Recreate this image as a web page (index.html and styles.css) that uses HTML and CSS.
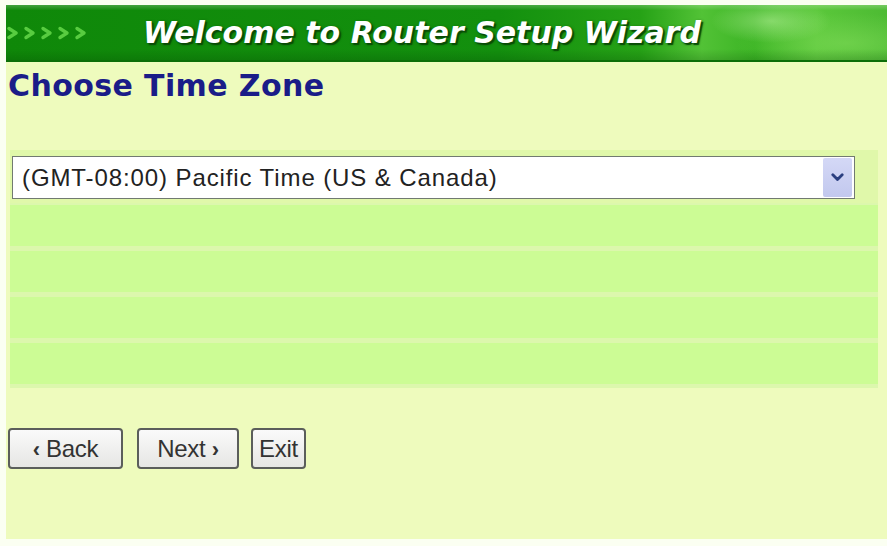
FILE: index.html
```html
<!DOCTYPE html>
<html lang="en">
<head>
  <meta charset="UTF-8">
  <meta name="viewport" content="width=device-width, initial-scale=1.0">
  <title>Router Setup Wizard</title>
  <link rel="stylesheet" href="styles.css">
</head>
<body>
  <div class="wizard">
    <div class="banner">
      <svg class="banner-arrows" width="90" height="14" viewBox="0 0 90 14" aria-hidden="true">
        <g fill="none" stroke="#58cc40" stroke-width="3.4" stroke-linecap="round" stroke-linejoin="round">
          <polyline points="2,2.5 9,7 2,11.5"/>
          <polyline points="19,2.5 26,7 19,11.5"/>
          <polyline points="36,2.5 43,7 36,11.5"/>
          <polyline points="53,2.5 60,7 53,11.5"/>
          <polyline points="70,2.5 77,7 70,11.5"/>
        </g>
      </svg>
      <h1 class="banner-title">Welcome to Router Setup Wizard</h1>
    </div>

    <h2 class="step-title">Choose Time Zone</h2>

    <div class="zone-panel">
      <div class="zone-select-row">
        <div class="select-wrap">
          <select class="zone-select">
            <option>(GMT-08:00) Pacific Time (US &amp; Canada)</option>
          </select>
          <span class="select-arrow">
            <svg width="13" height="9" viewBox="0 0 13 9" aria-hidden="true">
              <polyline points="1.8,1.8 6.5,6.6 11.2,1.8" fill="none" stroke="#2b3f80" stroke-width="2.8" stroke-linecap="round" stroke-linejoin="round"/>
            </svg>
          </span>
        </div>
      </div>
      <div class="zone-rows">
        <div class="zone-row"></div>
        <div class="zone-row"></div>
        <div class="zone-row"></div>
        <div class="zone-row"></div>
      </div>
    </div>

    <div class="actions">
      <button type="button" class="btn btn-back"><b>&lsaquo;</b> Back</button>
      <button type="button" class="btn btn-next">Next <b>&rsaquo;</b></button>
      <button type="button" class="btn btn-exit">Exit</button>
    </div>
  </div>
</body>
</html>
```

FILE: styles.css
```css
html, body {
  margin: 0;
  padding: 0;
  background-color: #fbfff2;
}
body {
  font-family: 'Liberation Sans', Arial, sans-serif;
  padding: 5px 0 0 6px;
  height: 546px;
  box-sizing: border-box;
  overflow: hidden;
}
.wizard {
  height: 534px;
  background: linear-gradient(#e0f79a 0, #ecfbb8 22px, #eefbbd 40px);
  background-color: #eefbbd;
}
.banner {
  height: 57px;
  display: flex;
  align-items: center;
  box-sizing: border-box;
  border-bottom: 2px solid #0c6e08;
  background:
    linear-gradient(to bottom, rgba(255, 255, 255, 0.22) 0, rgba(255, 255, 255, 0) 10%, rgba(0, 0, 0, 0) 80%, rgba(0, 50, 0, 0.18) 100%),
    radial-gradient(ellipse 60px 22px at 765px 16px, rgba(190, 245, 160, 0.55), rgba(190, 245, 160, 0) 100%),
    radial-gradient(ellipse 110px 30px at 840px 38px, rgba(130, 220, 90, 0.55), rgba(130, 220, 90, 0) 100%),
    linear-gradient(to right, #0f8809 0%, #13900e 56%, #26a216 72%, #52c236 79%, #3bb424 85%, #5ac73a 92%, #4dbb33 100%);
}
.banner-arrows {
  margin-left: 1px;
  flex: none;
}
.banner-title {
  margin: 0 0 0 46px;
  font-family: 'DejaVu Sans', Verdana, sans-serif;
  font-size: 30px;
  font-weight: bold;
  font-style: italic;
  color: #ffffff;
  letter-spacing: 0;
  text-shadow: 2px 2px 1px #0a4d06, 1px 1px 3px rgba(0, 40, 0, 0.6);
  white-space: nowrap;
}
.step-title {
  margin: 6px 0 0 2px;
  font-family: 'DejaVu Sans', Verdana, sans-serif;
  font-size: 30px;
  line-height: 36px;
  font-weight: bold;
  letter-spacing: 0.4px;
  color: #1a1c88;
}
.zone-panel {
  margin: 46px 9px 0 4px;
  background-color: #dcf7ad;
}
.zone-select-row {
  padding: 6px 23px 4px 2px;
  background-color: #e0f8aa;
}
.select-wrap {
  position: relative;
}
.zone-select {
  -webkit-appearance: none;
  appearance: none;
  display: block;
  width: 100%;
  height: 43px;
  margin: 0;
  padding: 0 0 0 9px;
  border: 1px solid #717a71;
  border-radius: 0;
  background-color: #ffffff;
  font-family: 'Liberation Sans', Arial, sans-serif;
  font-size: 24px;
  letter-spacing: 0.9px;
  color: #222222;
}
.select-arrow {
  position: absolute;
  top: 2px;
  right: 3px;
  width: 29px;
  height: 39px;
  display: flex;
  align-items: center;
  justify-content: center;
  background: linear-gradient(#d4d8f6, #c2c8ee);
  border-radius: 2px;
  pointer-events: none;
}
.zone-rows {
  display: grid;
  grid-template-rows: repeat(4, 41px);
  row-gap: 5px;
  padding: 2px 0 4px;
}
.zone-row {
  background-color: #ccfc95;
}
.actions {
  display: flex;
  gap: 14px;
  margin: 40px 0 0 2px;
}
.btn {
  height: 41px;
  padding: 0;
  border: 2px solid #5b5e5b;
  border-radius: 4px;
  background: linear-gradient(#fafafa, #e6e6e4);
  font-family: 'Liberation Sans', Arial, sans-serif;
  font-size: 24px;
  color: #333333;
  letter-spacing: -0.3px;
  cursor: pointer;
}
.btn b {
  font-size: 22px;
}
.btn-back {
  width: 115px;
}
.btn-next {
  width: 102px;
}
.btn-exit {
  width: 55px;
  margin-left: -2px;
}
```
